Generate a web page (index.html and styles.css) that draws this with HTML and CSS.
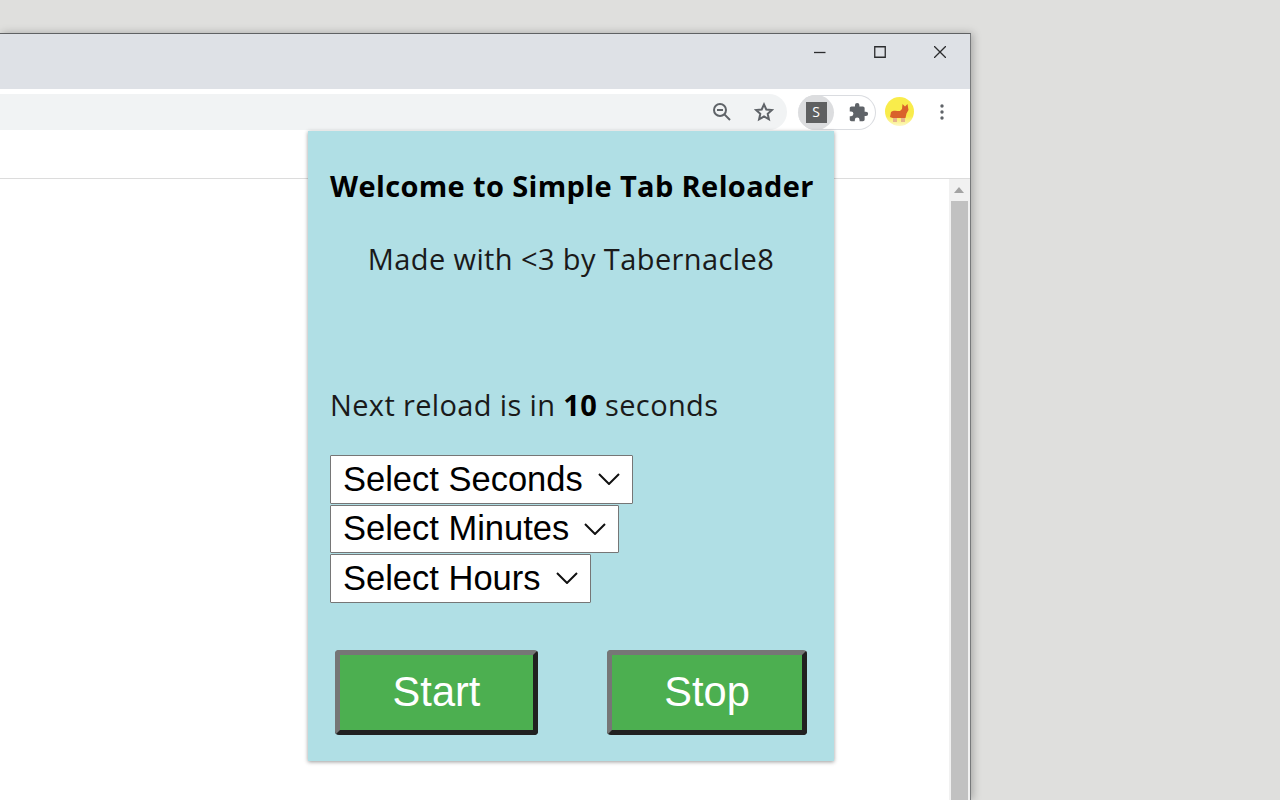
FILE: index.html
```html
<!DOCTYPE html>
<html lang="en">
<head>
  <meta charset="UTF-8">
  <title>Simple Tab Reloader</title>
  <link rel="stylesheet" href="styles.css">
</head>
<body>

  <div class="window">
    <div class="titlebar">
      <svg class="winbtn" viewBox="0 0 12 12"><path d="M0 6.500H11.500"/></svg>
      <svg class="winbtn" viewBox="0 0 12 12"><path d="M.75.75H11.250V11.250H.75Z"/></svg>
      <svg class="winbtn" viewBox="0 0 12 12"><path d="M0 0L12 12M12 0L0 12"/></svg>
    </div>

    <div class="toolbar">
      <div class="omnibox">
        <svg class="omni-icon" viewBox="0 0 20 20"><circle cx="8" cy="8" r="6"/><path d="M5 8H11M12.400 12.400L18 18"/></svg>
        <svg class="omni-icon star" viewBox="0 0 20 20"><path d="M10 2.400L12.300 7.500L17.800 8.100L13.700 11.800L14.900 17.300L10 14.500L5.100 17.300L6.300 11.800L2.200 8.100L7.700 7.500Z"/></svg>
      </div>
      <div class="ext-pill">
        <div class="ext-active"><span class="ext-s">S</span></div>
        <svg class="puzzle" viewBox="0 0 24 24"><path d="M20.500 11H19V7c0-1.100-.9-2-2-2h-4V3.500a2.500 2.500 0 0 0-5 0V5H4c-1.100 0-2 .9-2 2v3.800h1.500a2.700 2.700 0 0 1 0 5.400H2V20c0 1.100.9 2 2 2h3.800v-1.500a2.700 2.700 0 0 1 5.400 0V22H17c1.100 0 2-.9 2-2v-4h1.500a2.500 2.500 0 0 0 0-5z"/></svg>
      </div>
      <div class="avatar">
        <svg viewBox="0 0 29 29">
          <path class="dog-legs" d="M8 19H12V25H8ZM16 19H20V25H16Z"/>
          <path class="dog" d="M5 20L6 15C8 13 12 14 15 14L17 12L17.500 7L20 9.500L22.500 7L23.500 13L21.500 16.500L20.500 21H7.500Z"/>
        </svg>
      </div>
      <svg class="menu-dots" viewBox="0 0 4 16"><circle cx="2" cy="2" r="1.700"/><circle cx="2" cy="8" r="1.700"/><circle cx="2" cy="14" r="1.700"/></svg>
    </div>

    <div class="bookmarks"></div>

    <div class="content">
      <div class="scrollbar">
        <div class="scroll-arrow"></div>
        <div class="scroll-thumb"></div>
      </div>
    </div>

    <div class="popup">
      <h1 class="title">Welcome to Simple Tab Reloader</h1>
      <p class="credit">Made with &lt;3 by Tabernacle8</p>
      <p class="next">Next reload is in <b>10</b> seconds</p>

      <div class="selects">
        <div class="sel"><span>Select Seconds</span><svg viewBox="0 0 22 12"><path d="M1 1L11 11L21 1"/></svg></div>
        <div class="sel"><span>Select Minutes</span><svg viewBox="0 0 22 12"><path d="M1 1L11 11L21 1"/></svg></div>
        <div class="sel"><span>Select Hours</span><svg viewBox="0 0 22 12"><path d="M1 1L11 11L21 1"/></svg></div>
      </div>

      <div class="actions">
        <button class="btn btn-start">Start</button>
        <button class="btn btn-stop">Stop</button>
      </div>
    </div>
  </div>

</body>
</html>
```

FILE: styles.css
```css
html, body {
  margin: 0;
  height: 100%;
  overflow: hidden;
}

body {
  background: #dfdfdd;
  font-family: "Liberation Sans", Arial, sans-serif;
}

/* browser window */
.window {
  position: absolute;
  left: 0;
  top: 33px;
  width: 971px;
  height: 767px;
  box-sizing: border-box;
  border-top: 1px solid #5f6163;
  border-right: 1px solid #77797b;
  box-shadow: 2px 0 8px rgba(0,0,0,0.25);
  display: flex;
  flex-direction: column;
  background: #fff;
}

.titlebar {
  height: 55px;
  flex: none;
  background: #dee1e6;
  display: flex;
  justify-content: flex-end;
  align-items: flex-start;
  gap: 48px;
  padding: 12px 24px 0 0;
  box-sizing: border-box;
}

.winbtn {
  width: 12px;
  height: 12px;
  fill: none;
  stroke: #2b2c2e;
  stroke-width: 1.300;
}

.toolbar {
  height: 41px;
  flex: none;
  background: #fff;
  display: flex;
  align-items: flex-start;
}

.omnibox {
  width: 787px;
  height: 36px;
  margin-top: 5px;
  box-sizing: border-box;
  background: #f1f3f4;
  border-radius: 0 18px 18px 0;
  display: flex;
  justify-content: flex-end;
  align-items: center;
  gap: 22px;
  padding-right: 13px;
}

.omni-icon {
  width: 20px;
  height: 20px;
  fill: none;
  stroke: #5f6368;
  stroke-width: 2;
}

.ext-pill {
  width: 78px;
  height: 35px;
  margin: 6px 0 0 11px;
  box-sizing: border-box;
  border: 1px solid #dadce0;
  border-left: 0;
  border-radius: 18px;
  display: flex;
  align-items: center;
  gap: 13px;
}

.ext-active {
  width: 36px;
  height: 35px;
  flex: none;
  border-radius: 50%;
  background: #dcdddf;
  display: flex;
  align-items: center;
  justify-content: center;
}

.ext-s {
  width: 21px;
  height: 21px;
  background: #5f6061;
  color: #fff;
  font: 14px/20px "Open Sans", sans-serif;
  text-align: center;
}

.puzzle {
  width: 21px;
  height: 21px;
  margin-left: 1px;
  fill: #5f6368;
}

.avatar {
  width: 29px;
  height: 29px;
  margin: 8px 0 0 9px;
  flex: none;
  border-radius: 50%;
  background: linear-gradient(to bottom, #f9ec4b 65%, #fdf8c8);
  overflow: hidden;
}

.avatar svg {
  display: block;
  width: 29px;
  height: 29px;
}

.dog {
  fill: #d9622b;
}

.dog-legs {
  fill: #e6b48c;
}

.menu-dots {
  width: 4px;
  height: 16px;
  margin: 15px 0 0 26px;
  fill: #5f6368;
}

.bookmarks {
  height: 48px;
  flex: none;
  background: #fff;
  border-bottom: 1px solid #dcdcdc;
  box-sizing: content-box;
}

.content {
  flex: 1;
  display: flex;
  justify-content: flex-end;
  background: #fff;
}

.scrollbar {
  width: 21px;
  background: #f1f1f1;
  display: flex;
  flex-direction: column;
  align-items: center;
}

.scroll-arrow {
  margin: 8px 1px 8px 0;
  width: 0;
  height: 0;
  border: 5px solid transparent;
  border-top: 0;
  border-bottom: 6px solid #a3a3a3;
}

.scroll-thumb {
  flex: 1;
  width: 17px;
  background: #c1c1c1;
}

/* extension popup */
.popup {
  position: absolute;
  left: 308px;
  top: 97px;
  width: 526px;
  height: 630px;
  box-sizing: border-box;
  padding: 0 22px;
  background: #b0dfe5;
  box-shadow: 0 1px 4px rgba(0,0,0,0.4);
  font-family: "Open Sans", sans-serif;
  color: #1a1a1a;
}

.title {
  margin: 0;
  padding-top: 33px;
  font-size: 29px;
  line-height: 44px;
  font-weight: 700;
  letter-spacing: 0.37px;
  color: #000;
  white-space: nowrap;
  text-align: center;
}

.credit {
  margin: 29px 0 0;
  font-size: 29px;
  line-height: 44px;
  letter-spacing: 0.4px;
  text-align: center;
}

.next {
  margin: 102px 0 0;
  font-size: 29px;
  line-height: 44px;
  letter-spacing: 0.36px;
}

.next b {
  color: #000;
}

.selects {
  margin-top: 28px;
  display: flex;
  flex-direction: column;
  align-items: flex-start;
  gap: 1px;
  font-family: "Liberation Sans", Arial, sans-serif;
  color: #000;
}

.sel {
  height: 48.500px;
  box-sizing: border-box;
  display: flex;
  align-items: center;
  gap: 15px;
  padding: 0 12px 0 12px;
  background: #fff;
  border: 1px solid #767676;
  border-radius: 1px;
  font-size: 34.500px;
}

.sel svg {
  width: 22px;
  height: 12px;
  fill: none;
  stroke: #111;
  stroke-width: 2;
}

.actions {
  margin: 47.500px 5px 0;
  display: flex;
  justify-content: space-between;
}

.btn {
  height: 85px;
  box-sizing: border-box;
  background: #4caf50;
  color: #fff;
  font: 41.600px "Liberation Sans", Arial, sans-serif;
  padding: 0 0 2px;
  border: 5px solid;
  border-color: #767676 #212121 #212121 #767676;
  border-radius: 4px;
}

.btn-start {
  width: 203px;
}

.btn-stop {
  width: 200px;
}
```
